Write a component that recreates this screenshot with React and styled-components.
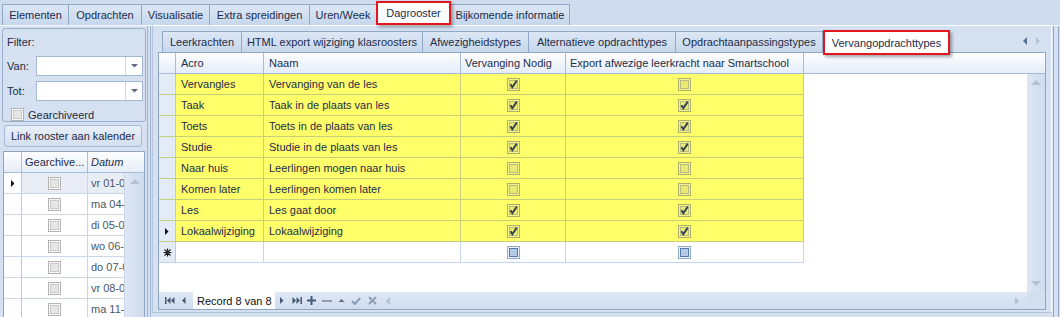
import React from 'react';
import styled, { createGlobalStyle, css } from 'styled-components';

const GlobalStyle = createGlobalStyle`
  html, body {
    margin: 0;
    padding: 0;
  }
  body {
    font-family: "Liberation Sans", Arial, sans-serif;
    font-size: 11px;
    color: #1d2c47;
    background: #d5e1f1;
  }
`;

const Screen = styled.div`
  width: 1060px;
  height: 317px;
  overflow: hidden;
  display: flex;
  flex-direction: column;
  background: #d5e1f1;
`;

const TopStrip = styled.div`
  height: 25px;
  flex: none;
  display: flex;
  align-items: flex-end;
  padding-left: 2px;
  box-sizing: border-box;
  background: #cfdcee;
`;

const TopTab = styled.div`
  width: ${({ w }) => w}px;
  height: 21px;
  box-sizing: border-box;
  display: flex;
  align-items: center;
  justify-content: center;
  white-space: nowrap;
  border: 1px solid #8fa8c8;
  border-bottom: none;
  margin-right: -1px;
  background: linear-gradient(#dce7f5, #c6d7ec);
  ${({ active }) => active && css`
    position: relative;
    z-index: 2;
    height: 24px;
    background: #fff;
    border: 2px solid #e3161f;
    box-shadow: 2px 2px 3px rgba(0, 0, 0, 0.35);
  `}
`;

const Page = styled.div`
  flex: 1;
  display: flex;
  border-top: 1px solid #f4f8fd;
  padding-left: 2px;
  min-height: 0;
`;

const Sidebar = styled.div`
  width: 144px;
  flex: none;
  display: flex;
  flex-direction: column;
  padding-top: 2px;
`;

const FilterGroup = styled.div`
  height: 94px;
  box-sizing: border-box;
  border: 1px solid #98afce;
  border-radius: 3px;
  padding: 5px 2px 0 4px;
  display: flex;
  flex-direction: column;
`;

const FilterTitle = styled.div`
  height: 16px;
  line-height: 16px;
`;

const FieldRow = styled.div`
  display: flex;
  align-items: center;
  height: 20px;
  margin-top: ${({ top }) => top}px;
`;

const FieldLabel = styled.div`
  width: 29px;
`;

const ComboBox = styled.div`
  flex: 1;
  height: 20px;
  box-sizing: border-box;
  background: #fff;
  border: 1px solid #a3b8d4;
  display: flex;
  justify-content: flex-end;
`;

const ComboButton = styled.div`
  width: 16px;
  border-left: 1px solid #c9d6e8;
  display: flex;
  align-items: center;
  justify-content: center;
`;

const CheckRow = styled.div`
  display: flex;
  align-items: center;
  gap: 4px;
  margin-top: 7px;
  padding-left: 4px;
`;

const LinkButton = styled.div`
  margin: 3px 4px 0 2px;
  height: 22px;
  box-sizing: border-box;
  border: 1px solid #a6bad5;
  border-radius: 3px;
  background: linear-gradient(#e9f0f9, #d2deef);
  display: flex;
  align-items: center;
  justify-content: center;
`;

const SideGrid = styled.div`
  margin: 4px 1px 0 1px;
  flex: 1;
  border: 1px solid #8ea5c4;
  border-bottom: none;
  background: #fff;
  display: flex;
  flex-direction: column;
  min-height: 0;
`;

const SideHeader = styled.div`
  height: 20px;
  flex: none;
  display: grid;
  grid-template-columns: 18px 66px 1fr;
  background: linear-gradient(#fdfeff, #e5edf8);
  border-bottom: 1px solid #a6bcd8;
`;

const HeadCell = styled.div`
  display: flex;
  align-items: center;
  padding-left: ${({ pad }) => pad ?? 5}px;
  border-right: ${({ last }) => (last ? 'none' : '1px solid #a6bcd8')};
  font-style: ${({ italic }) => (italic ? 'italic' : 'normal')};
  white-space: nowrap;
  overflow: hidden;
`;

const SideBody = styled.div`
  flex: 1;
  display: flex;
  min-height: 0;
`;

const SideRows = styled.div`
  flex: 1;
  overflow: hidden;
`;

const SideRow = styled.div`
  height: 21px;
  box-sizing: border-box;
  display: grid;
  grid-template-columns: 18px 66px 1fr;
  border-bottom: 1px solid #c9d7e9;
  background: ${({ selected }) => (selected ? '#e9eef6' : '#fff')};
`;

const Cell = styled.div`
  display: flex;
  align-items: center;
  justify-content: ${({ center }) => (center ? 'center' : 'flex-start')};
  padding-left: ${({ center, pad }) => (center ? 0 : pad ?? 5)}px;
  border-right: 1px solid ${({ line }) => line || '#c9d7e9'};
  white-space: nowrap;
  overflow: hidden;
  color: ${({ muted }) => (muted ? '#4a5568' : 'inherit')};
`;

const IndicatorCell = styled.div`
  display: flex;
  align-items: center;
  justify-content: center;
  background: ${({ tone }) => tone || '#fff'};
  border-right: 1px solid #b8c9df;
`;

const VScroll = styled.div`
  width: ${({ w }) => w}px;
  flex: none;
  background: linear-gradient(90deg, #dde7f4, #cfdcee);
  display: flex;
  flex-direction: column;
  justify-content: space-between;
  align-items: center;
  padding: 6px 0;
  box-sizing: border-box;
`;

const Splitter = styled.div`
  width: 2px;
  flex: none;
  margin: 0 1px 0 1px;
  border-left: 1px solid #9fb4d0;
  border-right: 1px solid #9fb4d0;
`;

const MainPanel = styled.div`
  width: 900px;
  flex: none;
  box-sizing: border-box;
  height: 288px;
  margin-top: -1px;
  border-top: 1px solid #fff;
  border-right: 1px solid #fff;
  border-left: 1px solid #b3c4dc;
  border-bottom: 1px solid #b3c4dc;
  padding: 4px 5px 0 5px;
  display: flex;
  flex-direction: column;
`;

const InnerTabStrip = styled.div`
  height: 22px;
  flex: none;
  display: flex;
  align-items: flex-end;
  padding-left: 4px;
`;

const InnerTab = styled(TopTab)`
  ${({ active }) => active && css`
    height: 25px;
    margin-bottom: -3px;
    margin-left: 1px;
  `}
`;

const TabArrows = styled.div`
  margin-left: auto;
  height: 22px;
  display: flex;
  align-items: center;
  gap: 9px;
  padding-right: 6px;
`;

const GridFrame = styled.div`
  height: 258px;
  flex: none;
  box-sizing: border-box;
  border: 1px solid #8ea5c4;
  background: #fff;
  display: flex;
  flex-direction: column;
`;

const GridHeader = styled.div`
  height: 21px;
  flex: none;
  box-sizing: border-box;
  display: grid;
  grid-template-columns: 17px 88px 197px 105px 238px 1fr;
  background: linear-gradient(#fdfeff, #e5edf8);
  border-bottom: 1px solid #a6bcd8;
`;

const GridBody = styled.div`
  flex: 1;
  display: flex;
  min-height: 0;
`;

const GridRows = styled.div`
  flex: 1;
`;

const DataRow = styled.div`
  width: 645px;
  height: 21px;
  box-sizing: border-box;
  display: grid;
  grid-template-columns: 17px 88px 197px 105px 238px;
  background: ${({ isNew }) => (isNew ? '#fff' : '#ffff6a')};
  border-bottom: 1px solid ${({ isNew }) => (isNew ? '#c3d6ee' : '#c6cf7c')};
`;

const GridFooter = styled.div`
  height: 17px;
  flex: none;
  display: flex;
  background: linear-gradient(#dfe8f5, #cfdcee);
`;

const Navigator = styled.div`
  flex: none;
  display: flex;
  align-items: center;
  padding-left: 4px;
`;

const NavBtn = styled.div`
  flex: none;
  width: ${({ w }) => w || 14}px;
  display: flex;
  justify-content: center;
  align-items: center;
`;

const RecordBox = styled.div`
  flex: none;
  width: 82px;
  box-sizing: border-box;
  height: 17px;
  background: #fff;
  padding-left: 4px;
  margin-left: 2px;
  display: flex;
  align-items: center;
  font-size: 11px;
  color: #111;
  white-space: nowrap;
`;

const HScroll = styled.div`
  flex: 1;
  display: flex;
  align-items: center;
  justify-content: space-between;
  padding: 0 8px 0 6px;
`;

const Corner = styled.div`
  width: 18px;
  background: #d3dfef;
`;

const RightEdge = styled.div`
  width: 4px;
  flex: none;
  margin-left: 1px;
  border-left: 1px solid #92a9c8;
  border-right: 1px solid #92a9c8;
`;

const Tri = ({ dir, color = '#5a6b86', size = 4 }) => {
  const s = size;
  const pts = {
    down: `0,0 ${s * 2},0 ${s},${s}`,
    up: `0,${s} ${s * 2},${s} ${s},0`,
    left: `${s},0 ${s},${s * 2} 0,${s}`,
    right: `0,0 0,${s * 2} ${s},${s}`,
  }[dir];
  const w = dir === 'up' || dir === 'down' ? s * 2 : s;
  const h = dir === 'up' || dir === 'down' ? s : s * 2;
  return (
    <svg width={w} height={h} viewBox={`0 0 ${w} ${h}`}>
      <polygon points={pts} fill={color} />
    </svg>
  );
};

const CheckBox = ({ tone = 'yellow', checked }) => {
  const palette = {
    yellow: { outer: '#aeb16c', ring: '#f4f48a', inner: '#b8bb7c', fill: '#e9ea74' },
    blue: { outer: '#93a9c9', ring: '#eef4fb', inner: '#587aab', fill: '#b4cbe8' },
    gray: { outer: '#b3b3b3', ring: '#f7f7f7', inner: '#c9c9c9', fill: '#e6e6e6' },
  }[tone];
  return (
    <svg width="13" height="13" viewBox="0 0 13 13">
      <rect x="0.5" y="0.5" width="12" height="12" fill={palette.ring} stroke={palette.outer} />
      <rect x="2.5" y="2.5" width="8" height="8" fill={palette.fill} stroke={palette.inner} />
      {checked && (
        <path d="M3.5 6.2 L5.3 9.2 L9.8 2.6" fill="none" stroke="#34404f" strokeWidth="1.9" />
      )}
    </svg>
  );
};

const NavIcon = ({ kind }) => {
  const dark = '#455873';
  const gray = '#8d9cb4';
  switch (kind) {
    case 'first':
      return (
        <svg width="10" height="7" viewBox="0 0 10 7">
          <rect x="0" y="0" width="1.5" height="7" fill={dark} />
          <polygon points="5.5,0 5.5,7 2,3.5" fill={dark} />
          <polygon points="9.5,0 9.5,7 6,3.5" fill={dark} />
        </svg>
      );
    case 'prev':
      return <Tri dir="left" color={dark} size={3.5} />;
    case 'next':
      return <Tri dir="right" color={dark} size={3.5} />;
    case 'last':
      return (
        <svg width="10" height="7" viewBox="0 0 10 7">
          <polygon points="0.5,0 0.5,7 4,3.5" fill={dark} />
          <polygon points="4.5,0 4.5,7 8,3.5" fill={dark} />
          <rect x="8.5" y="0" width="1.5" height="7" fill={dark} />
        </svg>
      );
    case 'plus':
      return (
        <svg width="9" height="9" viewBox="0 0 9 9">
          <rect x="3.5" y="0" width="2" height="9" fill={dark} />
          <rect x="0" y="3.5" width="9" height="2" fill={dark} />
        </svg>
      );
    case 'minus':
      return (
        <svg width="10" height="2" viewBox="0 0 10 2">
          <rect x="0" y="0" width="10" height="2" fill={gray} />
        </svg>
      );
    case 'up':
      return <Tri dir="up" color="#5f708b" size={3.5} />;
    case 'check':
      return (
        <svg width="10" height="8" viewBox="0 0 10 8">
          <path d="M1 4 L3.8 7 L9.2 1" fill="none" stroke={gray} strokeWidth="2" />
        </svg>
      );
    case 'cancel':
      return (
        <svg width="9" height="9" viewBox="0 0 9 9">
          <path d="M1 1 L8 8 M8 1 L1 8" stroke={gray} strokeWidth="2" />
        </svg>
      );
    default:
      return null;
  }
};

const RowMarker = () => <Tri dir="right" color="#111" size={3.5} />;

const NewRowMarker = () => (
  <svg width="9" height="9" viewBox="0 0 9 9">
    <path d="M4.5 0.5 V8.5 M0.5 4.5 H8.5 M1.5 1.5 L7.5 7.5 M7.5 1.5 L1.5 7.5" stroke="#222" strokeWidth="1.2" />
  </svg>
);

const topTabs = [
  { label: 'Elementen', w: 67 },
  { label: 'Opdrachten', w: 74 },
  { label: 'Visualisatie', w: 69 },
  { label: 'Extra spreidingen', w: 101 },
  { label: 'Uren/Week', w: 68 },
  { label: 'Dagrooster', w: 75, active: true },
  { label: 'Bijkomende informatie', w: 120 },
];

const innerTabs = [
  { label: 'Leerkrachten', w: 80 },
  { label: 'HTML export wijziging klasroosters', w: 182 },
  { label: 'Afwezigheidstypes', w: 107 },
  { label: 'Alternatieve opdrachttypes', w: 148 },
  { label: 'Opdrachtaanpassingstypes', w: 148 },
  { label: 'Vervangopdrachttypes', w: 127, active: true },
];

const records = [
  { acro: 'Vervangles', naam: 'Vervanging van de les', nodig: true, exp: false },
  { acro: 'Taak', naam: 'Taak in de plaats van les', nodig: true, exp: true },
  { acro: 'Toets', naam: 'Toets in de plaats van les', nodig: true, exp: true },
  { acro: 'Studie', naam: 'Studie in de plaats van les', nodig: true, exp: true },
  { acro: 'Naar huis', naam: 'Leerlingen mogen naar huis', nodig: false, exp: false },
  { acro: 'Komen later', naam: 'Leerlingen komen later', nodig: false, exp: false },
  { acro: 'Les', naam: 'Les gaat door', nodig: true, exp: true },
  { acro: 'Lokaalwijziging', naam: 'Lokaalwijziging', nodig: true, exp: true },
];

// only the first characters show in the narrow Datum column
const dates = ['vr 01-09', 'ma 04-09', 'di 05-09', 'wo 06-09', 'do 07-09', 'vr 08-09', 'ma 11-09'];

const yellowLine = '#c6cf7c';
const blueLine = '#c3d6ee';

export default function App() {
  return (
    <Screen>
      <GlobalStyle />
      <TopStrip>
        {topTabs.map((t) => (
          <TopTab key={t.label} w={t.w} active={t.active}>{t.label}</TopTab>
        ))}
      </TopStrip>
      <Page>
        <Sidebar>
          <FilterGroup>
            <FilterTitle>Filter:</FilterTitle>
            <FieldRow top={6}>
              <FieldLabel>Van:</FieldLabel>
              <ComboBox>
                <ComboButton><Tri dir="down" color="#5d6b80" size={3.5} /></ComboButton>
              </ComboBox>
            </FieldRow>
            <FieldRow top={5}>
              <FieldLabel>Tot:</FieldLabel>
              <ComboBox>
                <ComboButton><Tri dir="down" color="#5d6b80" size={3.5} /></ComboButton>
              </ComboBox>
            </FieldRow>
            <CheckRow>
              <CheckBox tone="gray" />
              <span>Gearchiveerd</span>
            </CheckRow>
          </FilterGroup>
          <LinkButton>Link rooster aan kalender</LinkButton>
          <SideGrid>
            <SideHeader>
              <HeadCell />
              <HeadCell pad={3}>Gearchive...</HeadCell>
              <HeadCell italic last pad={3}>Datum</HeadCell>
            </SideHeader>
            <SideBody>
              <SideRows>
                {dates.map((d, i) => (
                  <SideRow key={d} selected={i === 0}>
                    <IndicatorCell>{i === 0 && <RowMarker />}</IndicatorCell>
                    <Cell center><CheckBox tone="gray" /></Cell>
                    <Cell muted pad={3}>{d}</Cell>
                  </SideRow>
                ))}
              </SideRows>
              <VScroll w={19}>
                <Tri dir="up" color="#b4c2d6" size={5} />
              </VScroll>
            </SideBody>
          </SideGrid>
        </Sidebar>
        <Splitter />
        <MainPanel>
          <InnerTabStrip>
            {innerTabs.map((t) => (
              <InnerTab key={t.label} w={t.w} active={t.active}>{t.label}</InnerTab>
            ))}
            <TabArrows>
              <Tri dir="left" color="#5a6f8f" size={4} />
              <Tri dir="right" color="#b3c1d6" size={4} />
            </TabArrows>
          </InnerTabStrip>
          <GridFrame>
            <GridHeader>
              <HeadCell />
              <HeadCell>Acro</HeadCell>
              <HeadCell>Naam</HeadCell>
              <HeadCell pad={4}>Vervanging Nodig</HeadCell>
              <HeadCell pad={4}>Export afwezige leerkracht naar Smartschool</HeadCell>
              <HeadCell last />
            </GridHeader>
            <GridBody>
              <GridRows>
                {records.map((r, i) => (
                  <DataRow key={r.acro}>
                    <IndicatorCell tone="#e3ebf6">{i === records.length - 1 && <RowMarker />}</IndicatorCell>
                    <Cell line={yellowLine}>{r.acro}</Cell>
                    <Cell line={yellowLine}>{r.naam}</Cell>
                    <Cell line={yellowLine} center><CheckBox checked={r.nodig} /></Cell>
                    <Cell line={yellowLine} center><CheckBox checked={r.exp} /></Cell>
                  </DataRow>
                ))}
                <DataRow isNew>
                  <IndicatorCell tone="#e3ebf6"><NewRowMarker /></IndicatorCell>
                  <Cell line={blueLine} />
                  <Cell line={blueLine} />
                  <Cell line={blueLine} center><CheckBox tone="blue" /></Cell>
                  <Cell line={blueLine} center><CheckBox tone="blue" /></Cell>
                </DataRow>
              </GridRows>
              <VScroll w={18}>
                <Tri dir="up" color="#b3c1d6" size={5} />
                <Tri dir="down" color="#b3c1d6" size={5} />
              </VScroll>
            </GridBody>
            <GridFooter>
              <Navigator>
                <NavBtn w={14}><NavIcon kind="first" /></NavBtn>
                <NavBtn w={14}><NavIcon kind="prev" /></NavBtn>
                <RecordBox>Record 8 van 8</RecordBox>
                <NavBtn w={14}><NavIcon kind="next" /></NavBtn>
                <NavBtn w={15}><NavIcon kind="last" /></NavBtn>
                <NavBtn w={15}><NavIcon kind="plus" /></NavBtn>
                <NavBtn w={15}><NavIcon kind="minus" /></NavBtn>
                <NavBtn w={14}><NavIcon kind="up" /></NavBtn>
                <NavBtn w={16}><NavIcon kind="check" /></NavBtn>
                <NavBtn w={16}><NavIcon kind="cancel" /></NavBtn>
              </Navigator>
              <HScroll>
                <Tri dir="left" color="#b3c1d6" size={4} />
                <Tri dir="right" color="#b3c1d6" size={4} />
              </HScroll>
              <Corner />
            </GridFooter>
          </GridFrame>
        </MainPanel>
        <RightEdge />
      </Page>
    </Screen>
  );
}
